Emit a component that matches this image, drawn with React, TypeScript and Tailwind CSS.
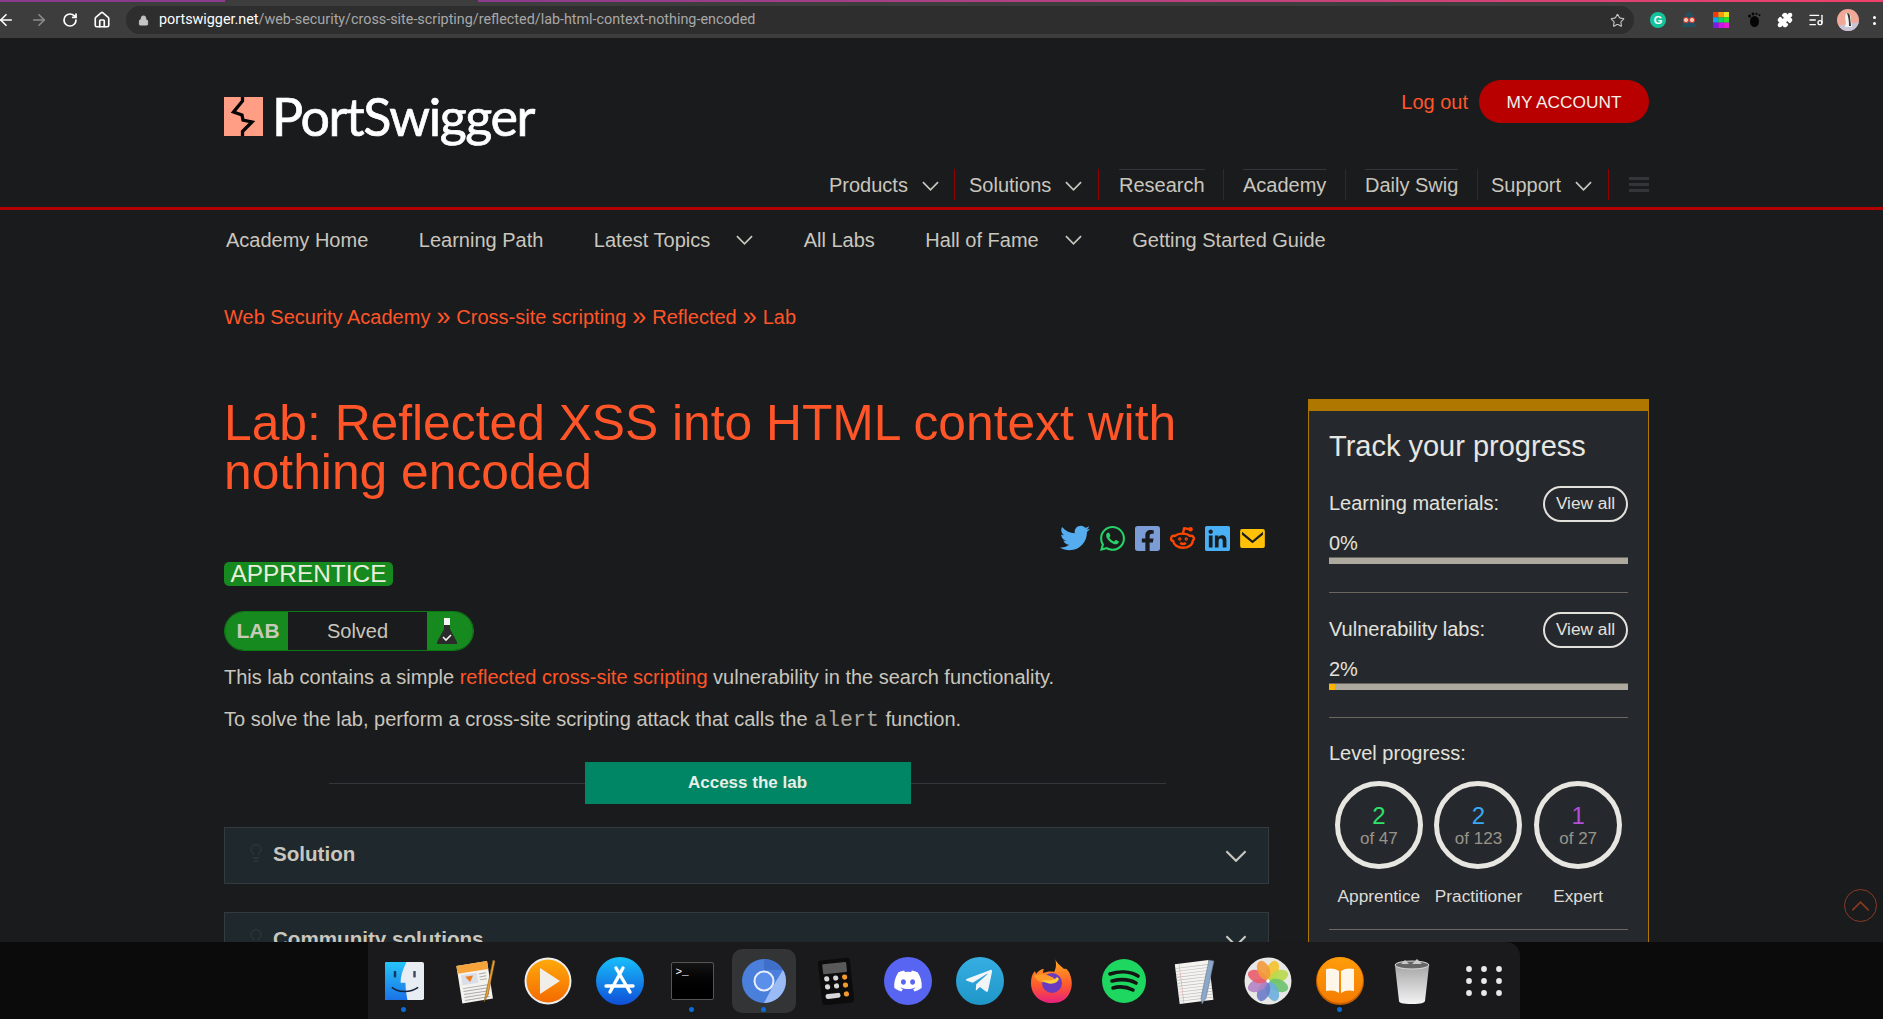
import React from "react";
import { ArrowLeft, ArrowRight, RotateCw, Home, Lock, Star, Lightbulb, ChevronUp, Puzzle, ListMusic } from "lucide-react";
import { FaTwitter, FaWhatsapp, FaFacebookSquare, FaLinkedin, FaDiscord, FaTelegramPlane } from "react-icons/fa";
import { TbBrandReddit } from "react-icons/tb";

const Chev = ({ className = "" }: { className?: string }) => (
  <svg viewBox="0 0 18 10" className={"w-[17px] h-[10px] " + className} fill="none" stroke="currentColor" strokeWidth="1.8">
    <path d="M1 1l8 8 8-8" />
  </svg>
);

const Finder = () => (
  <svg viewBox="4 3 40 42" className="w-[39px] h-[38px]" preserveAspectRatio="none">
    <defs>
      <linearGradient id="fb" x1="0" y1="0" x2="0" y2="1"><stop offset="0" stopColor="#25c5f8" /><stop offset="1" stopColor="#1b72e8" /></linearGradient>
    </defs>
    <rect x="4" y="3" width="40" height="42" rx="2" fill="#e8edf3" />
    <path d="M6 3h20c-4 9-6 16-6 23h5c0 7 1 13 2 19H6a2 2 0 0 1-2-2V5a2 2 0 0 1 2-2z" fill="url(#fb)" />
    <rect x="13" y="13" width="2.5" height="7" fill="#12345a" />
    <rect x="33" y="13" width="2.5" height="7" fill="#3c4a5c" />
    <path d="M11 31c7 6 19 6 27 0" fill="none" stroke="#12233a" strokeWidth="1.6" />
  </svg>
);
const Pages = () => (
  <svg viewBox="0 0 48 48" className="w-12 h-12">
    <g transform="rotate(-9 24 24)">
      <rect x="7" y="6" width="31" height="38" fill="#f4f2ee" />
      <rect x="7" y="6" width="31" height="8" fill="#f4a43b" />
      <rect x="10" y="16" width="16" height="10" fill="#d9dee8" />
      <path d="M14 18h8l-4 6z" fill="#ef7c1f" />
      {[29, 32, 35, 38, 41].map((y) => <rect key={y} x="10" y={y} width="25" height="1" fill="#aaa" />)}
      {[17, 20, 23].map((y) => <rect key={y} x="28" y={y} width="7" height="1" fill="#aaa" />)}
    </g>
    <path d="M41 3l-7 33-2 9 4-7 7-34z" fill="#f0a030" stroke="#7a5a20" strokeWidth=".6" />
  </svg>
);
const Play = () => (
  <svg viewBox="0 0 48 48" className="w-12 h-12">
    <defs>
      <linearGradient id="pl" x1="0" y1="0" x2="0" y2="1"><stop offset="0" stopColor="#ffa90a" /><stop offset="1" stopColor="#f46a00" /></linearGradient>
    </defs>
    <circle cx="24" cy="24" r="23.5" fill="#eee" />
    <circle cx="24" cy="24" r="21.5" fill="url(#pl)" />
    <path d="M16 11l20 13-20 13z" fill="#f1eee9" />
  </svg>
);
const AppStore = () => (
  <svg viewBox="0 0 48 48" className="w-12 h-12">
    <defs>
      <linearGradient id="as" x1="0" y1="0" x2="0" y2="1"><stop offset="0" stopColor="#18bffb" /><stop offset="1" stopColor="#0f4fd8" /></linearGradient>
    </defs>
    <circle cx="24" cy="24" r="24" fill="url(#as)" />
    <path d="M27 11L14 35M20 11l14 24M10 29h27" stroke="#fff" strokeWidth="3.4" strokeLinecap="round" fill="none" />
  </svg>
);
const Terminal = () => (
  <div className="w-[43px] h-[38px] rounded-[2px] border border-[#555] bg-gradient-to-b from-[#151515] to-black relative">
    <span className="absolute left-[4px] top-[2px] text-[11px] leading-[14px] text-white font-['Liberation_Mono',monospace]">&gt;_</span>
  </div>
);
const Chromium = () => (
  <svg viewBox="0 0 48 48" className="w-12 h-12">
    <circle cx="24" cy="24" r="22" fill="#4a7fdc" />
    <path d="M24 2a22 22 0 0 1 19 11H24z" fill="#3f6fc9" />
    <path d="M43 13a22 22 0 0 1-19 33l9-17z" fill="#9abbf5" />
    <circle cx="24" cy="24" r="9.5" fill="#5a90ea" stroke="#e8eefb" strokeWidth="2" />
  </svg>
);
const Calc = () => (
  <svg viewBox="0 0 48 48" className="w-12 h-12">
    <g transform="rotate(-6 24 24)">
      <rect x="8" y="2" width="32" height="45" rx="3" fill="#0c0c0c" />
      <rect x="12" y="6" width="24" height="10" rx="1" fill="#595959" />
      {[21, 29].map((y) => [15, 24].map((x) => <circle key={x + "-" + y} cx={x} cy={y} r="2.6" fill="#d8d8d8" />))}
      {[21, 29, 38].map((y) => <circle key={y} cx="33" cy={y} r="2.6" fill="#f29a2e" />)}
      <rect x="12" y="36" width="15" height="5" rx="2.5" fill="#d8d8d8" />
    </g>
  </svg>
);
const IconCircle = ({ bg, children }: { bg: string; children: React.ReactNode }) => (
  <div className={"w-12 h-12 rounded-full flex items-center justify-center " + bg}>{children}</div>
);
const Firefox = () => (
  <svg viewBox="0 0 48 48" className="w-12 h-12">
    <defs>
      <linearGradient id="ff" x1="0" y1="0" x2="0" y2="1"><stop offset="0" stopColor="#ffb01f" /><stop offset=".6" stopColor="#ff5a2c" /><stop offset="1" stopColor="#e7207f" /></linearGradient>
    </defs>
    <path d="M27 1c1 5 5 7 9 11 2-1 3 0 5 3 3 7 4 13 1 20-3 8-10 11-18 11C12 46 3 38 3 26c0-5 1-9 4-12l1 3c2-3 5-5 8-5-1 2-1 3-1 4 3-1 8-2 11-1 3-5 2-10 1-14z" fill="url(#ff)" />
    <circle cx="24" cy="26" r="10" fill="#6a3ac0" />
    <path d="M6 19c5-3 13-2 18 1 4 2 4 6 0 6-4-1-10 0-14-2z" fill="#ff9a2a" />
    <path d="M14 23c6 1 12 1 15-3l2 2c-2 5-10 7-17 1z" fill="#ffce3a" />
  </svg>
);
const Spotify = () => (
  <svg viewBox="0 0 48 48" className="w-12 h-12">
    <circle cx="24" cy="24" r="22" fill="#1ed760" />
    <path d="M10 17c9-3 20-3 28 2M12 24c8-2 17-2 24 2M13 31c7-2 14-1 20 2" stroke="#141414" strokeWidth="3.6" strokeLinecap="round" fill="none" />
  </svg>
);
const TextEdit = () => (
  <svg viewBox="0 0 48 48" className="w-12 h-12">
    <g transform="rotate(-7 22 24)">
      <rect x="5" y="5" width="34" height="40" fill="#f4f3f0" />
      {[9, 12, 15, 18, 21, 24, 27, 30, 33, 36, 39, 42].map((y) => <rect key={y} x="5" y={y} width="34" height=".6" fill="#b8b8b8" />)}
      <rect x="9" y="5" width=".6" height="40" fill="#dcaaaa" />
    </g>
    <path d="M37 3l-8 38 1 6 4-6 8-37z" fill="#8ba7c9" stroke="#5a6a80" strokeWidth=".5" />
  </svg>
);
const Photos = () => (
  <svg viewBox="0 0 48 48" className="w-12 h-12">
    <circle cx="24" cy="24" r="23.5" fill="#e8e8e6" />
    {[
      ["#f3c32c", 22.5], ["#b8d94a", 67.5], ["#6cc36b", 112.5], ["#6aaedd", 157.5],
      ["#6b7bc9", 202.5], ["#b184c4", 247.5], ["#ea5d6b", 292.5], ["#f39a3a", 337.5],
    ].map(([c, a]) => (
      <ellipse key={a as number} cx="24" cy="12.5" rx="6" ry="10" fill={c as string} fillOpacity=".9" transform={`rotate(${a} 24 24)`} />
    ))}
    <circle cx="24" cy="24" r="1.5" fill="#fff" />
  </svg>
);
const Books = () => (
  <svg viewBox="0 0 48 48" className="w-12 h-12">
    <defs>
      <linearGradient id="bk" x1="0" y1="0" x2="0" y2="1"><stop offset="0" stopColor="#ff9d0a" /><stop offset="1" stopColor="#f57c00" /></linearGradient>
    </defs>
    <circle cx="24" cy="24" r="24" fill="#c75f00" />
    <circle cx="24" cy="23" r="23" fill="url(#bk)" />
    <path d="M23 14c-4-3-9-3-13-2v22c4-1 9-1 13 2zM25 14c4-3 9-3 13-2v22c-4-1-9-1-13 2z" fill="#fff6ea" />
  </svg>
);
const Trash = () => (
  <svg viewBox="0 0 48 48" className="w-12 h-12">
    <defs>
      <linearGradient id="tr" x1="0" y1="0" x2="0" y2="1"><stop offset="0" stopColor="#a8a8a8" /><stop offset="1" stopColor="#f4f4f4" /></linearGradient>
    </defs>
    <path d="M7 9l4 35c.2 2 3 3 13 3s12-1 13-3l4-35z" fill="url(#tr)" />
    <ellipse cx="24" cy="8" rx="17" ry="4" fill="#666" stroke="#ddd" />
    <path d="M13 7l4-4 4 4M24 7l5-5 5 5" fill="#c9c9c9" />
  </svg>
);
const Launchpad = () => (
  <svg viewBox="0 0 48 48" className="w-12 h-12" fill="#e9e9e9">
    {[12, 24, 36].map((y) => [9, 24, 39].map((x) => <circle key={x + "-" + y} cx={x} cy={y} r="2.9" />))}
  </svg>
);

const dock: { el: React.ReactNode; dot?: boolean; active?: boolean }[] = [
  { el: <Finder />, dot: true },
  { el: <Pages /> },
  { el: <Play /> },
  { el: <AppStore /> },
  { el: <Terminal />, dot: true },
  { el: <Chromium />, dot: true, active: true },
  { el: <Calc /> },
  { el: <IconCircle bg="bg-[#5865f2]"><FaDiscord className="text-white text-[30px]" /></IconCircle> },
  { el: <IconCircle bg="bg-gradient-to-b from-[#37aee2] to-[#1e96c8]"><FaTelegramPlane className="text-[#f1f5f8] text-[30px] mr-[3px]" /></IconCircle> },
  { el: <Firefox /> },
  { el: <Spotify /> },
  { el: <TextEdit /> },
  { el: <Photos /> },
  { el: <Books />, dot: true },
  { el: <Trash /> },
  { el: <Launchpad /> },
];

const NavItem = ({ w, pl, label, chev, line }: { w: string; pl: string; label: string; chev?: boolean; line?: boolean }) => (
  <div className={"h-[31px] flex items-stretch border-r border-[#8f0000] " + w + " " + pl}>
    <span className={"text-[20px] leading-[30px] text-[#c9c6be] " + (line ? "border-t border-[#333538]" : "border-t border-transparent")}>{label}</span>
    {chev && <Chev className="ml-[14px] mt-[12px] text-[#c9c6be]" />}
  </div>
);

const SubNav = ({ label, chev }: { label: string; chev?: boolean }) => (
  <div className="flex items-center gap-[26px] text-[20px] text-[#c9c6be]">
    <span>{label}</span>
    {chev && <Chev className="text-[#c9c6be]" />}
  </div>
);

const Ring = ({ n, of, color, label }: { n: string; of: string; color: string; label: string }) => (
  <div className="flex flex-col items-center">
    <div className="w-[88px] h-[88px] rounded-full border-[5px] border-[#e8e6e1] flex flex-col items-center justify-center">
      <span className={"text-[24px] leading-[24px] mt-[3px] " + color}>{n}</span>
      <span className="text-[17px] leading-[22px] text-[#99948a]">{of}</span>
    </div>
    <span className="mt-[16px] text-[17.3px] leading-[22px] text-[#dedbd6]">{label}</span>
  </div>
);

const Stat = ({ label, pct, fill }: { label: string; pct: string; fill?: boolean }) => (
  <div className="flex flex-col">
    <div className="flex items-center justify-between h-[36px]">
      <span className="text-[20px] text-[#e3e1dc] mt-[-2px]">{label}</span>
      <span className="w-[85px] h-[36px] rounded-full border-2 border-[#e3e1dc] flex items-center justify-center text-[17.3px] text-[#e3e1dc]">View all</span>
    </div>
    <span className="mt-[11px] text-[20px] leading-[20px] text-[#e3e1dc]">{pct}</span>
    <div className="mt-[4px] h-[7px] bg-[#aea99f] border-t border-[#6a675f]">
      {fill && <div className="h-full w-[6px] bg-[#ffb400]" />}
    </div>
  </div>
);

const Accordion = ({ label }: { label: string }) => (
  <div className="h-[57px] bg-[#1e282d] border border-[#343b3f] flex items-center pl-[21px] pr-[21px] shrink-0">
    <Lightbulb className="w-[20px] h-[24px] text-[#353c40] mt-[-6px]" strokeWidth={1.2} />
    <span className="ml-[7px] text-[20.6px] font-bold text-[#c9c6be] mt-[-3px]">{label}</span>
    <Chev className="ml-auto !w-[22px] !h-[12px] text-[#c9c6be]" />
  </div>
);

const Sep = () => <span className="mx-[6px] text-[25px] leading-[28px] mt-[-3px]">»</span>;

export default function App() {
  return (
    <div className="h-screen w-full flex flex-col overflow-hidden bg-[#1a1b1d] font-['Liberation_Sans',Arial,sans-serif]">
      {/* browser bar */}
      <div className="h-[38px] shrink-0 bg-[#3d3d3d] flex flex-col relative">
        <div className="h-[2px] w-full flex">
          <div className="w-[225px] bg-[#8b3a8e]" />
          <div className="w-[253px] bg-[#3d3d3d]" />
          <div className="flex-1 bg-gradient-to-r from-[#8b3a8e] to-[#f0406a]" />
        </div>
        <div className="flex-1 flex items-center">
          <ArrowLeft className="w-[18px] h-[18px] text-white ml-[-3px]" strokeWidth={2.2} />
          <ArrowRight className="w-[18px] h-[18px] text-[#8d8d8d] ml-[15px]" strokeWidth={2.2} />
          <RotateCw className="w-[16px] h-[16px] text-white ml-[14px]" strokeWidth={2.6} />
          <Home className="w-[18px] h-[18px] text-white ml-[15px]" strokeWidth={2.2} />
          <div className="ml-[15px] w-[1508px] h-[28px] rounded-full bg-[#2e2e2e] flex items-center pl-[12px] pr-[9px]">
            <Lock className="w-[11px] h-[11px] text-[#c5c5c5]" fill="#c5c5c5" />
            <span className="ml-[10px] text-[14.35px] font-['Roboto',sans-serif] text-white">portswigger.net<span className="text-[#a8a8a8]">/web-security/cross-site-scripting/reflected/lab-html-context-nothing-encoded</span></span>
            <Star className="ml-auto w-[15px] h-[15px] text-[#c5c5c5]" strokeWidth={1.8} />
          </div>
          <div className="ml-[16px] w-[16px] h-[16px] rounded-full bg-[#15c39a] flex items-center justify-center text-white text-[11px] leading-none font-bold">G</div>
          <svg viewBox="0 0 16 16" className="ml-[15px] w-[16px] h-[16px]">
            <path d="M8 0c3 0 4 3 5 8l2 7H1l2-7c1-5 2-8 5-8z" fill="#23505e" />
            <circle cx="5" cy="8" r="2.6" fill="#f0c9b0" stroke="#d33" />
            <circle cx="11" cy="8" r="2.6" fill="#f0c9b0" stroke="#d33" />
          </svg>
          <svg viewBox="0 0 16 16" className="ml-[16px] w-[16px] h-[16px]">
            <rect width="5.4" height="5.4" fill="#f2380f" /><rect x="5.3" width="5.4" height="5.4" fill="#f99a12" /><rect x="10.6" width="5.4" height="5.4" fill="#ece41f" />
            <rect y="5.3" width="5.4" height="5.4" fill="#10a4f0" /><rect x="5.3" y="5.3" width="5.4" height="5.4" fill="#13cf6a" /><rect x="10.6" y="5.3" width="5.4" height="5.4" fill="#2fe02a" />
            <rect y="10.6" width="5.4" height="5.4" fill="#7a1be8" /><rect x="5.3" y="10.6" width="5.4" height="5.4" fill="#c818e8" /><rect x="10.6" y="10.6" width="5.4" height="5.4" fill="#e818d8" />
          </svg>
          <svg viewBox="0 0 16 16" className="ml-[16px] w-[16px] h-[16px]" fill="#050505">
            <ellipse cx="9.5" cy="9.5" rx="4.5" ry="5.5" /><circle cx="4.5" cy="4" r="1.5" /><circle cx="8" cy="2" r="1.4" /><circle cx="11.5" cy="1.8" r="1.1" /><circle cx="14.5" cy="3" r="1" />
          </svg>
          <Puzzle className="ml-[16px] w-[16px] h-[16px] text-white" fill="#fff" />
          <ListMusic className="ml-[15px] w-[16px] h-[16px] text-white" />
          <svg viewBox="0 0 22 22" className="ml-[13px] w-[22px] h-[22px]">
            <clipPath id="av"><circle cx="11" cy="11" r="11" /></clipPath>
            <g clipPath="url(#av)">
              <rect width="22" height="22" fill="#f2a898" />
              <path d="M0 22V17L22 13V22z" fill="#c8c4d8" />
              <path d="M10 4c3 0 4 3 4 7l1 7H8c1-4 1-6 0-9 0-3 1-5 2-5z" fill="#f4f1ee" />
              <path d="M10 4c2 0 3 2 3 4l1 9h-2c0-4 0-7-2-13z" fill="#333" />
            </g>
          </svg>
          <div className="ml-[14px] flex flex-col gap-[3px]">
            <span className="w-[3px] h-[3px] bg-white rounded-full" />
            <span className="w-[3px] h-[3px] bg-white rounded-full" />
          </div>
        </div>
      </div>

      {/* page */}
      <div className="flex-1 min-h-0 overflow-hidden relative">
        <header className="h-[172px] border-b-[3px] border-[#b40000] pt-[42px]">
          <div className="ml-[224px] w-[1425px]">
            <div className="h-[89px] flex justify-between items-start">
              <div className="flex items-start mt-[17px]">
                <svg viewBox="0 0 39 39" className="w-[39px] h-[39px]">
                  <rect width="39" height="39" fill="#ff9e85" />
                  <path d="M18.5 0v4L9.5 15l8.5 3 1 5 9 2-9.500 9.500V39" fill="none" stroke="#050505" strokeWidth="3.300" />
                </svg>
                <span className="ml-[9px] mt-[-13px] text-[52px] leading-[64px] tracking-[-1.4px] text-white [-webkit-text-stroke:0.7px_white] font-['Lato',sans-serif]">PortSwigger</span>
              </div>
              <div className="flex items-center">
                <span className="text-[20px] text-[#ff5528]">Log out</span>
                <span className="ml-[11px] w-[170px] h-[43px] pt-[2px] rounded-full bg-[#b80000] flex items-center justify-center text-[17.3px] text-[#f3f0ea]">MY ACCOUNT</span>
              </div>
            </div>
            <nav className="h-[31px] flex justify-end items-stretch">
              <NavItem w="w-[128px]" pl="pl-[2px]" label="Products" chev />
              <NavItem w="w-[144px]" pl="pl-[14px]" label="Solutions" chev />
              <NavItem w="w-[125px]" pl="pl-[20px]" label="Research" line />
              <NavItem w="w-[122px]" pl="pl-[19px]" label="Academy" line />
              <NavItem w="w-[132px]" pl="pl-[19px]" label="Daily Swig" line />
              <NavItem w="w-[131px]" pl="pl-[13px]" label="Support" chev />
              <div className="w-[40px] pl-[20px] flex flex-col gap-[3px] pt-[8px]">
                <span className="h-[3px] bg-[#333538]" />
                <span className="h-[3px] bg-[#333538]" />
                <span className="h-[3px] bg-[#333538]" />
              </div>
            </nav>
          </div>
        </header>

        <div className="ml-[224px] w-[1425px]">
          <div className="h-[60px] flex items-center gap-[50.5px] pl-[2px]">
            <SubNav label="Academy Home" />
            <SubNav label="Learning Path" />
            <SubNav label="Latest Topics" chev />
            <SubNav label="All Labs" />
            <SubNav label="Hall of Fame" chev />
            <SubNav label="Getting Started Guide" />
          </div>
          <div className="mt-[33px] mb-[68px] h-[28px] flex items-center text-[20px] text-[#ff5528]">
            <span>Web Security Academy</span><Sep />
            <span>Cross-site scripting</span><Sep />
            <span>Reflected</span><Sep />
            <span>Lab</span>
          </div>

          <div className="flex items-start">
            <main className="w-[1045px] flex flex-col">
              <h1 className="text-[49.75px] leading-[49px] text-[#ff5528]">Lab: Reflected XSS into HTML context with nothing encoded</h1>
              <div className="mt-[28px] h-[26px] flex justify-end items-center pr-[4px] gap-[10px]">
                <FaTwitter className="w-[30px] h-[30px] shrink-0 text-[#55acee]" />
                <FaWhatsapp className="w-[25px] h-[29px] shrink-0 text-[#25d366]" />
                <FaFacebookSquare className="w-[25px] h-[29px] shrink-0 text-[#7b9cd4]" />
                <TbBrandReddit className="w-[26px] h-[26px] mx-[-0.5px] shrink-0 text-[#ff4500]" strokeWidth={2.2} />
                <FaLinkedin className="w-[25px] h-[29px] shrink-0 text-[#4ab0f5]" />
                <svg viewBox="0 0 26 20" className="w-[25px] h-[19px] shrink-0">
                  <rect width="26" height="20" rx="2" fill="#ffc107" />
                  <path d="M2 3l11 9 11-9v3l-11 9L2 6z" fill="#1a1b1d" />
                </svg>
              </div>
              <div className="mt-[11px] flex h-[24px]">
                <span className="flex h-[24px] w-[169px] items-center justify-center rounded-[5px] bg-[#178a1f] text-[24.4px] text-[#e8efdc]">APPRENTICE</span>
              </div>
              <div className="mt-[25px] w-[250px] h-[40px] rounded-full border border-[#0c7a12] flex overflow-hidden">
                <div className="w-[63px] bg-[#178a1f] flex items-center justify-center pl-[3px] text-[21px] font-bold text-[#c9c9b8]">LAB</div>
                <div className="flex-1 flex items-center justify-center text-[20px] text-[#c9c6be]">Solved</div>
                <div className="w-[46px] bg-[#178a1f] flex items-center justify-start pl-[10px]">
                  <svg viewBox="0 0 20 26" className="w-[20px] h-[26px]">
                    <rect x="7" y="0" width="6" height="7" fill="#f5f5f5" />
                    <path d="M7 7h6v4l7 13a1 1 0 0 1-1 2H1a1 1 0 0 1-1-2l7-13z" fill="#2b2b2b" />
                    <path d="M6 19l3 3 5-5" fill="none" stroke="#f5f5f5" strokeWidth="1.6" />
                  </svg>
                </div>
              </div>
              <p className="mt-[12px] text-[20px] leading-[28px] text-[#c9c6be]">This lab contains a simple <span className="text-[#ff5528]">reflected cross-site scripting</span> vulnerability in the search functionality.</p>
              <p className="mt-[14px] text-[20px] leading-[28px] text-[#c9c6be]">To solve the lab, perform a cross-site scripting attack that calls the <span className="font-['Liberation_Mono',monospace] text-[21.6px] text-[#aaa79f] mx-[1px]">alert</span> function.</p>
              <div className="mt-[28px] h-[42px] flex items-center ml-[105px] mr-[103px]">
                <div className="flex-1 h-px bg-[#333739]" />
                <div className="w-[326px] h-[42px] bg-[#008565] flex items-center justify-center text-[17px] font-bold text-[#e8efe6]">Access the lab</div>
                <div className="flex-1 h-px bg-[#333739]" />
              </div>
              <div className="mt-[23px] flex flex-col gap-[28px]">
                <Accordion label="Solution" />
                <Accordion label="Community solutions" />
              </div>
            </main>

            <aside className="ml-[39px] w-[341px] h-[600px] shrink-0 bg-[#25292d] border border-t-[12px] border-[#b07700] px-[20px] pt-[17px]">
              <h2 className="text-[29px] leading-[36px] text-[#e8e6e1]">Track your progress</h2>
              <div className="mt-[22px]"><Stat label="Learning materials:" pct="0%" /></div>
              <div className="mt-[28px] h-px bg-[#6a675f]" />
              <div className="mt-[19px]"><Stat label="Vulnerability labs:" pct="2%" fill /></div>
              <div className="mt-[27px] h-px bg-[#6a675f]" />
              <div className="mt-[25px] text-[20px] leading-[20px] text-[#e3e1dc]">Level progress:</div>
              <div className="mt-[18px] grid grid-cols-3">
                <Ring n="2" of="of 47" color="text-[#2fe06a]" label="Apprentice" />
                <Ring n="2" of="of 123" color="text-[#39a8f5]" label="Practitioner" />
                <Ring n="1" of="of 27" color="text-[#b44fd8]" label="Expert" />
              </div>
              <div className="mt-[22px] h-px bg-[#6a675f]" />
            </aside>
          </div>
        </div>

        <div className="absolute left-[1844px] top-[851px] w-[33px] h-[33px] rounded-full border-[1.5px] border-[#8a3a20] flex items-center justify-center">
          <ChevronUp className="w-[32px] h-[32px] text-[#8a3a20]" strokeWidth={1.2} />
        </div>
      </div>

      {/* dock */}
      <div className="h-[77px] shrink-0 flex bg-[#0b0b0c] relative z-10">
        <div className="ml-[368px] w-[1152px] bg-[#1a1a1c] rounded-tr-[14px] flex items-start">
          {dock.map((d, i) => (
            <div key={i} className="relative w-[72px] h-[77px] flex justify-center pt-[15px]">
              {d.active && <div className="absolute left-[4px] top-[7px] w-[64px] h-[64px] rounded-[10px] bg-[#333436]" />}
              <div className="relative h-[48px] flex items-center justify-center">{d.el}</div>
              {d.dot && <span className="absolute left-[33px] top-[65px] w-[5px] h-[5px] rounded-full bg-[#0a6cd6]" />}
            </div>
          ))}
        </div>
      </div>
    </div>
  );
}
